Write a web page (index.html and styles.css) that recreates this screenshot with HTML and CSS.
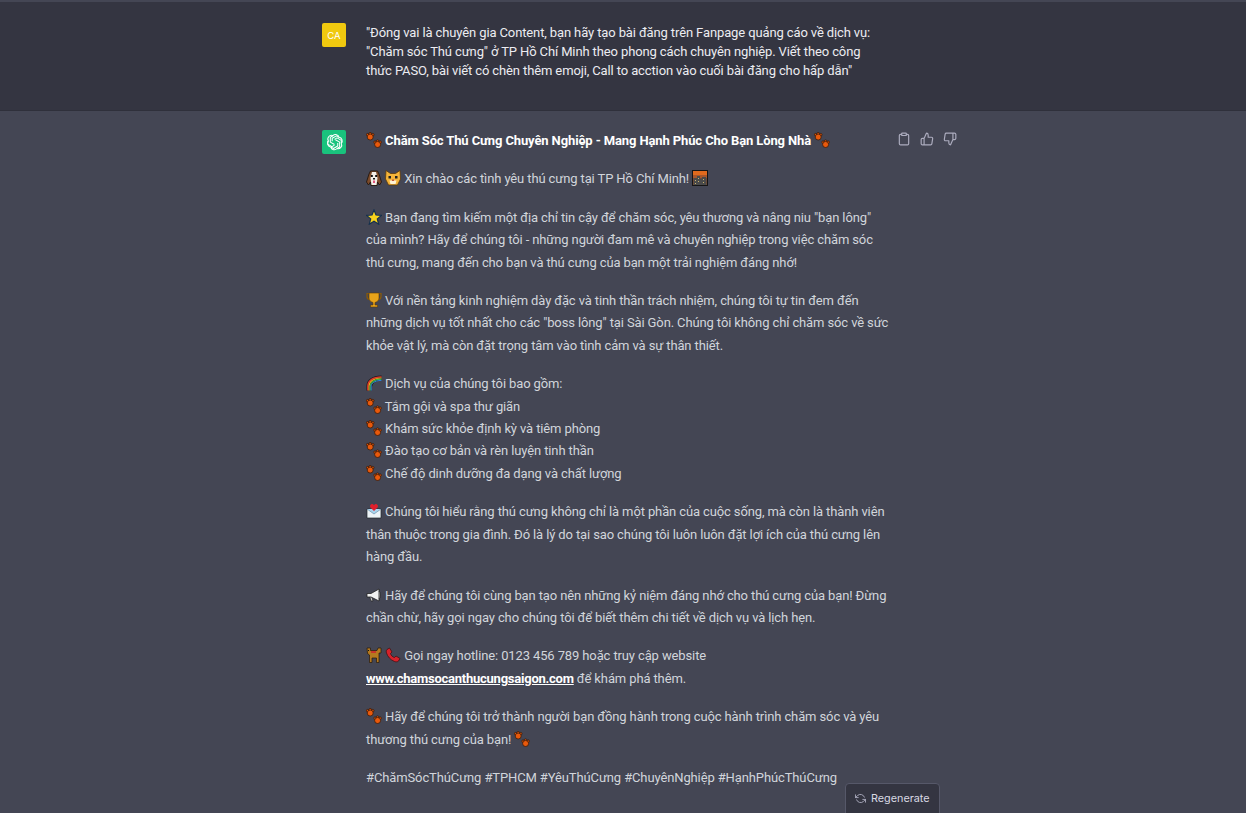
FILE: index.html
```html
<!DOCTYPE html>
<html lang="vi">
<head>
  <meta charset="UTF-8" />
  <title>Chăm sóc thú cưng</title>
  <link rel="stylesheet" href="styles.css">
</head>
<body>

  <!-- Emoji dùng lại nhiều lần -->
  <svg class="sprites" width="0" height="0" aria-hidden="true">
    <symbol id="paw" viewBox="0 0 16 16">
      <g fill="#e8590c" stroke="#2e1406" stroke-width=".7">
        <circle cx="1.700" cy="2.700" r="1.300"/><circle cx="4.200" cy="1.700" r="1.300"/><circle cx="6.700" cy="2.700" r="1.300"/><circle cx="4.200" cy="5" r="3"/>
        <circle cx="9.100" cy="10.200" r="1.300"/><circle cx="11.600" cy="9.200" r="1.300"/><circle cx="14.100" cy="10.200" r="1.300"/><circle cx="11.600" cy="12.500" r="3"/>
      </g>
    </symbol>
    <symbol id="dog" viewBox="0 0 16 16">
      <path d="M4.500 1h7l1.500 3 2.500 8-2 3-2-3-.5 3.500h-6L4.500 12l-2 3-2-3L3 4z" fill="#7b4a2a" stroke="#1d1209" stroke-width=".8"/>
      <path d="M6 2h4l1.500 6-1 7h-5l-1-7z" fill="#f3efe8"/>
      <rect x="5" y="5" width="1.800" height="2" fill="#111"/><rect x="9.200" y="5" width="1.800" height="2" fill="#111"/>
      <rect x="7" y="8" width="2" height="1.500" fill="#111"/><rect x="7" y="10.500" width="2" height="2.500" fill="#e0557a"/>
    </symbol>
    <symbol id="cat" viewBox="0 0 16 16">
      <path d="M1 .5 5.500 3.500h5L15 .5 15.500 9 12.500 15h-9L.5 9z" fill="#f5b53a" stroke="#5c3a0c" stroke-width=".8"/>
      <rect x="3.500" y="6" width="2.500" height="2.500" fill="#222"/><rect x="10" y="6" width="2.500" height="2.500" fill="#222"/>
      <path d="M4.500 10.500h7l-1 3.500h-5z" fill="#fff3d6"/><rect x="7" y="9.500" width="2" height="1.500" fill="#c4553a"/>
    </symbol>
    <symbol id="city" viewBox="0 0 16 16">
      <rect x=".5" y=".5" width="15" height="15" fill="#6b4a3a" stroke="#151515"/>
      <rect x="1" y="1" width="14" height="4" fill="#e06a1e"/><rect x="1" y="5" width="14" height="3" fill="#a8562a"/>
      <path d="M2 15V8h3V6h3v3h2V7h4v8z" fill="#4a4a4a"/>
      <path d="M3 10h1v1H3zm3-2h1v1H6zm0 3h1v1H6zm5-2h1v1h-1zm0 3h1v1h-1zm-8 1h1v1H3z" fill="#c9b36a"/>
    </symbol>
    <symbol id="star" viewBox="0 0 16 16">
      <path d="M8 1l2 5 5.500.4-4.200 3.500 1.400 5.300L8 12.300l-4.700 2.900 1.400-5.300L.5 6.400 6 6z" fill="#f7d21c" stroke="#14304f" stroke-width="1.200"/>
    </symbol>
    <symbol id="trophy" viewBox="0 0 16 16">
      <path d="M3 1.500H1v3c0 2 1.500 3 3 3M13 1.500h2v3c0 2-1.500 3-3 3" fill="none" stroke="#8a5a08" stroke-width="1.200"/>
      <path d="M3 1h10v5c0 3-2.500 4-4 4.500V13h2.500v2h-7v-2H7v-2.500C5.500 10 3 9 3 6z" fill="#e9a41a" stroke="#5c3a08" stroke-width=".6"/>
    </symbol>
    <symbol id="rainbow" viewBox="0 0 16 16">
      <path d="M.5 15.500V11C.5 5 6 .5 15.500.5v5C9 5.500 5.500 9 5.500 15.500z" fill="#1c1c1c"/>
      <path d="M1.800 15.500V11c0-5 4.700-9.200 13.700-9.200" fill="none" stroke="#e8352c" stroke-width="1.300"/>
      <path d="M3 15.500V11c0-4 4-8 12.500-8" fill="none" stroke="#f6a21c" stroke-width="1.200"/>
      <path d="M4.200 15.500V11c0-3 3.500-6.800 11.300-6.800" fill="none" stroke="#3db34a" stroke-width="1.200"/>
      <path d="M5.200 15.500V11c0-2 3-5.600 10.300-5.600" fill="none" stroke="#2e86de" stroke-width="1"/>
    </symbol>
    <symbol id="mail" viewBox="0 0 16 16">
      <path d="M1 6h14v9H1z" fill="#eef4f8" stroke="#20262c" stroke-width=".7"/>
      <path d="M1 6l7 5 7-5" fill="#a9d4ee" stroke="#5f87a3" stroke-width=".6"/>
      <path d="M8 8L4.500 4.500C3.500 3 4.500 1 6 1c1 0 1.600.6 2 1.300C8.400 1.600 9 1 10 1c1.500 0 2.500 2 1.500 3.500z" fill="#e0202c"/>
    </symbol>
    <symbol id="horn" viewBox="0 0 16 16">
      <path d="M1 6.500h4L13 2v12L5 10H1z" fill="#f2f2f2" stroke="#222" stroke-width=".8"/>
      <path d="M4 10.500l1 3.500h2l-.8-3" fill="#cfcfcf" stroke="#222" stroke-width=".7"/>
      <path d="M13 4c1.700 1 1.700 7 0 8" fill="#8c8c8c" stroke="#222" stroke-width=".8"/>
    </symbol>
    <symbol id="dog2" viewBox="0 0 16 16">
      <path d="M1 1h3.500v2.500H11L12 1h3v5h-2v9.500h-2.500V11H6v4.500H3.500V8L1.500 6.500z" fill="#b5791f" stroke="#24180a" stroke-width=".7"/>
      <rect x="5" y="4" width="5" height="2" fill="#c9342a"/><rect x="2" y="3" width="1" height="1" fill="#111"/>
    </symbol>
    <symbol id="phone" viewBox="0 0 16 16">
      <path d="M2 2.500L4.500 1l2.500 4-1.500 1.500c.5 2 2 3.500 4 4L11 9l4 2.500-1.500 2.500c-1 1-2.500 1-4 .5C5.500 13 2.500 9.500 1.500 6 1 4.700 1.200 3.400 2 2.500z" fill="#d6222a" stroke="#3c0d0f" stroke-width=".7"/>
    </symbol>
  </svg>

  <div class="top-strip"></div>

  <!-- Câu hỏi -->
  <section class="row row-user">
    <div class="row-inner">
      <div class="avatar avatar-user">CA</div>
      <div class="prompt">"Đóng vai là chuyên gia Content, bạn hãy tạo bài đăng trên Fanpage quảng cáo về dịch vụ: "Chăm sóc Thú cưng" ở TP Hồ Chí Minh theo phong cách chuyên nghiệp. Viết theo công thức PASO, bài viết có chèn thêm emoji, Call to acction vào cuối bài đăng cho hấp dẫn"</div>
    </div>
  </section>

  <!-- Câu trả lời -->
  <section class="row row-bot">
    <div class="row-inner">
      <div class="avatar avatar-bot">
        <svg viewBox="0 0 24 24" width="19" height="19" fill="none" stroke="#fff" stroke-width="1.300" stroke-linejoin="round">
          <path d="M10 3.400a4.600 4.600 0 0 1 7.800 2.100 4.600 4.600 0 0 1 2.800 7.600 4.600 4.600 0 0 1-5.400 6.500 4.600 4.600 0 0 1-7.900-1.900 4.600 4.600 0 0 1-2.900-7.500A4.600 4.600 0 0 1 10 3.400z"/>
          <path d="M10 3.400L6.700 5.300v6.200l5.300 3M17.800 5.500l-3.300-1.900-5.400 3.100v3.800M20.600 13.100V9.300l-5.400-3.100-3.200 1.900M15.200 19.600l3.300-1.900v-6.200l-5.300-3M7.400 17.700l3.300 1.900 5.400-3.100v-3.800M3.400 10.200v3.900l5.400 3.100 3.200-1.900"/>
        </svg>
      </div>
      <div class="answer">
        <p><strong><svg class="emoji"><use href="#paw"/></svg> Chăm Sóc Thú Cưng Chuyên Nghiệp - Mang Hạnh Phúc Cho Bạn Lòng Nhà <svg class="emoji"><use href="#paw"/></svg></strong></p>
        <p><svg class="emoji"><use href="#dog"/></svg> <svg class="emoji"><use href="#cat"/></svg> Xin chào các tình yêu thú cưng tại TP Hồ Chí Minh! <svg class="emoji"><use href="#city"/></svg></p>
        <p><svg class="emoji"><use href="#star"/></svg> Bạn đang tìm kiếm một địa chỉ tin cậy để chăm sóc, yêu thương và nâng niu "bạn lông" của mình? Hãy để chúng tôi - những người đam mê và chuyên nghiệp trong việc chăm sóc thú cưng, mang đến cho bạn và thú cưng của bạn một trải nghiệm đáng nhớ!</p>
        <p><svg class="emoji"><use href="#trophy"/></svg> Với nền tảng kinh nghiệm dày đặc và tinh thần trách nhiệm, chúng tôi tự tin đem đến những dịch vụ tốt nhất cho các "boss lông" tại Sài Gòn. Chúng tôi không chỉ chăm sóc về sức khỏe vật lý, mà còn đặt trọng tâm vào tình cảm và sự thân thiết.</p>
        <p><svg class="emoji"><use href="#rainbow"/></svg> Dịch vụ của chúng tôi bao gồm:<br>
          <svg class="emoji"><use href="#paw"/></svg> Tắm gội và spa thư giãn<br>
          <svg class="emoji"><use href="#paw"/></svg> Khám sức khỏe định kỳ và tiêm phòng<br>
          <svg class="emoji"><use href="#paw"/></svg> Đào tạo cơ bản và rèn luyện tinh thần<br>
          <svg class="emoji"><use href="#paw"/></svg> Chế độ dinh dưỡng đa dạng và chất lượng</p>
        <p><svg class="emoji"><use href="#mail"/></svg> Chúng tôi hiểu rằng thú cưng không chỉ là một phần của cuộc sống, mà còn là thành viên thân thuộc trong gia đình. Đó là lý do tại sao chúng tôi luôn luôn đặt lợi ích của thú cưng lên hàng đầu.</p>
        <p><svg class="emoji"><use href="#horn"/></svg> Hãy để chúng tôi cùng bạn tạo nên những kỷ niệm đáng nhớ cho thú cưng của bạn! Đừng chần chừ, hãy gọi ngay cho chúng tôi để biết thêm chi tiết về dịch vụ và lịch hẹn.</p>
        <p><svg class="emoji"><use href="#dog2"/></svg> <svg class="emoji"><use href="#phone"/></svg> Gọi ngay hotline: 0123 456 789 hoặc truy cập website <a href="#">www.chamsocanthucungsaigon.com</a> để khám phá thêm.</p>
        <p><svg class="emoji"><use href="#paw"/></svg> Hãy để chúng tôi trở thành người bạn đồng hành trong cuộc hành trình chăm sóc và yêu thương thú cưng của bạn! <svg class="emoji"><use href="#paw"/></svg></p>
        <p>#ChămSócThúCưng #TPHCM #YêuThúCưng #ChuyênNghiệp #HạnhPhúcThúCưng</p>
      </div>
      <div class="actions">
        <svg viewBox="0 0 24 24" width="14" height="14"><path d="M16 4h2a2 2 0 0 1 2 2v14a2 2 0 0 1-2 2H6a2 2 0 0 1-2-2V6a2 2 0 0 1 2-2h2"/><rect x="8" y="2" width="8" height="4" rx="1"/></svg>
        <svg viewBox="0 0 24 24" width="14" height="14"><path d="M14 9V5a3 3 0 0 0-3-3l-4 9v11h11.300a2 2 0 0 0 2-1.700l1.400-9a2 2 0 0 0-2-2.300zM7 22H4a2 2 0 0 1-2-2v-7a2 2 0 0 1 2-2h3"/></svg>
        <svg viewBox="0 0 24 24" width="14" height="14"><path d="M10 15v4a3 3 0 0 0 3 3l4-9V2H5.700a2 2 0 0 0-2 1.700l-1.400 9a2 2 0 0 0 2 2.300zM17 2h2.700A2.300 2.300 0 0 1 22 4v7a2.300 2.300 0 0 1-2.300 2H17"/></svg>
      </div>
    </div>
  </section>

  <!-- Nút nổi -->
  <button class="regen">
    <svg viewBox="0 0 24 24" width="11" height="11"><path d="M1 4v6h6M23 20v-6h-6"/><path d="M20.500 9A9 9 0 0 0 5.600 5.600L1 10M23 14l-4.600 4.400A9 9 0 0 1 3.500 15"/></svg>
    Regenerate
  </button>

</body>
</html>
```

FILE: styles.css
```css
* {
  box-sizing: border-box;
  margin: 0;
  padding: 0;
}

html, body {
  height: 100%;
  overflow: hidden;
}

body {
  background: #444654;
  font-family: 'Roboto', 'Liberation Sans', sans-serif;
  font-size: 13px;
  letter-spacing: -0.120px;
  color: #d1d5db;
  position: relative;
}

.sprites {
  position: absolute;
}

.top-strip {
  height: 2px;
  background: #444654;
}

/* Các hàng hội thoại */
.row {
  border-bottom: 1px solid #2f303b;
}

.row-user {
  background: #343541;
  height: 109px;
}

.row-bot {
  border-bottom: none;
}

.row-inner {
  display: flex;
  align-items: flex-start;
  width: 634px;
  margin-left: 322px;
  gap: 20px;
}

.row-user .row-inner {
  padding-top: 21px;
}

.row-bot .row-inner {
  padding-top: 19px;
}

.avatar {
  width: 24px;
  height: 24px;
  flex: none;
  border-radius: 2px;
  display: flex;
  align-items: center;
  justify-content: center;
}

.avatar-user {
  background: #f0c90f;
  color: #fff;
  font-family: 'Inter', sans-serif;
  font-size: 9.500px;
  letter-spacing: 0;
}

.avatar-bot {
  background: #19c37d;
}

.prompt {
  width: 520px;
  line-height: 19px;
  color: #ececf1;
}

/* Nội dung trả lời */
.answer {
  width: 523px;
  flex: none;
  line-height: 22.400px;
}

.answer p {
  margin-bottom: 16px;
}

.answer strong {
  color: #fff;
  font-weight: 700;
}

.answer a {
  color: #fff;
  font-weight: 700;
  letter-spacing: -0.240px;
}

.emoji {
  width: 16px;
  height: 16px;
  vertical-align: -3px;
}

.actions {
  display: flex;
  gap: 9px;
  margin-left: -12px;
  padding-top: 2px;
}

.actions svg, .regen svg {
  fill: none;
  stroke: #acacbe;
  stroke-width: 2;
  stroke-linecap: round;
  stroke-linejoin: round;
}

.regen {
  position: absolute;
  left: 845px;
  top: 783px;
  width: 95px;
  height: 40px;
  padding: 0 0 10px 9px;
  display: flex;
  align-items: center;
  gap: 5px;
  background: #343541;
  border: 1px solid #565869;
  border-radius: 4px;
  color: #d9d9e3;
  font-family: 'Inter', sans-serif;
  font-size: 10.800px;
  letter-spacing: 0;
}
```
